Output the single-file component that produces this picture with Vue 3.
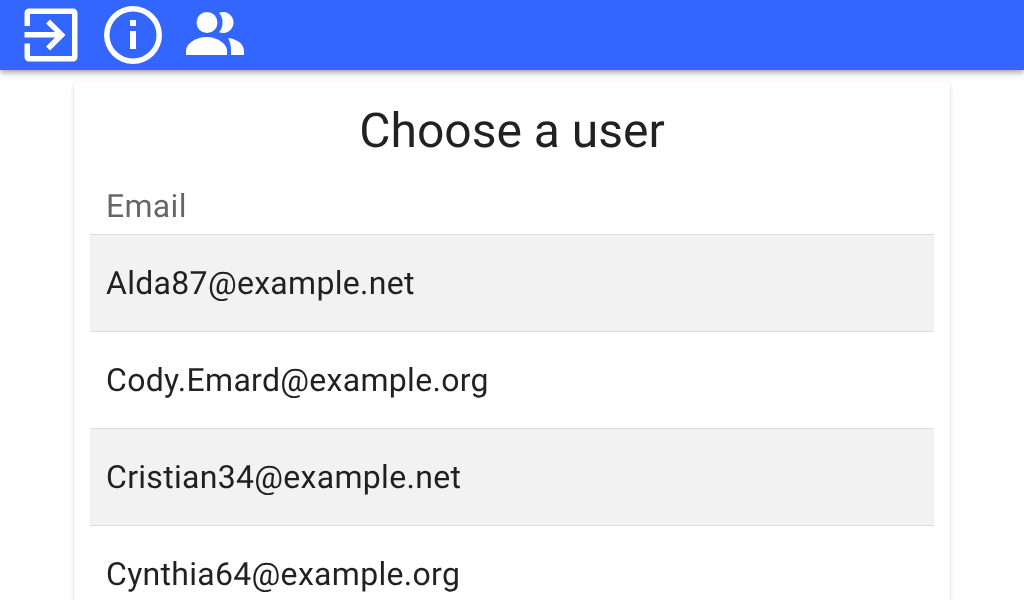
<template>
  <div class="page">
    <header class="toolbar">
      <svg class="icon" width="54" height="70" viewBox="24 0 54 70" fill="#fff">
        <path fill-rule="evenodd" d="M29 8.500h44a4.500 4.500 0 0 1 4.500 4.500v44a4.500 4.500 0 0 1-4.500 4.500H29a4.500 4.500 0 0 1-4.500-4.500V43.500H30V56h42V14H30v12h-5.500V13A4.500 4.500 0 0 1 29 8.500z" />
        <path d="M24.500 32h30.500l-9-8.500 4-4 15.500 15.500-15.500 15.500-4-4 9-9H24.500z" />
      </svg>
      <svg class="icon info" width="58" height="70" viewBox="104 0 58 70" fill="#fff">
        <path fill-rule="evenodd" d="M133 6a29 29 0 1 0 0 58 29 29 0 0 0 0-58zm0 5.500a23.500 23.500 0 1 1 0 47 23.500 23.500 0 0 1 0-47z" />
        <path d="M130 20h6v6h-6zM130 31h6v18h-6z" />
      </svg>
      <svg class="icon people" width="60" height="70" viewBox="185 0 60 70" fill="#fff">
        <circle cx="207" cy="22.500" r="10.500" />
        <path d="M219 12.800a10.500 10.500 0 1 1 0 19.400 15 15 0 0 0 0-19.400z" />
        <path d="M186 55v-4c0-8 11-14 20.500-14S227 43 227 51v4z" />
        <path d="M228 38c9 1 16 6 16 13v4h-13v-5c0-4-1-9-3-12z" />
      </svg>
    </header>
    <main class="card">
      <h1>Choose a user</h1>
      <table>
        <thead>
          <tr><th>Email</th></tr>
        </thead>
        <tbody>
          <tr v-for="email in emails" :key="email">
            <td>{{ email }}</td>
          </tr>
        </tbody>
      </table>
    </main>
  </div>
</template>

<script setup>
const emails = [
  'Alda87@example.net',
  'Cody.Emard@example.org',
  'Cristian34@example.net',
  'Cynthia64@example.org'
]
</script>

<style>
html, body {
  height: 100%;
  overflow: hidden;
  background: #fff;
}
</style>

<style scoped>
.page {
  font-family: Roboto, sans-serif;
  color: rgba(0, 0, 0, 0.87);
  text-rendering: geometricPrecision;
}

.toolbar {
  height: 70px;
  background: #3366ff;
  display: flex;
  align-items: center;
  padding-left: 24px;
  gap: 26px;
  box-shadow: 0 2px 4px -1px rgba(0, 0, 0, 0.2), 0 4px 5px rgba(0, 0, 0, 0.14), 0 1px 10px rgba(0, 0, 0, 0.12);
}

.people {
  margin-left: -3px;
}

.card {
  width: 844px;
  margin: 12px auto 0;
  padding: 0 16px;
  border-radius: 4px;
  background: #fff;
  box-shadow: 0 3px 1px -2px rgba(0, 0, 0, 0.2), 0 2px 2px rgba(0, 0, 0, 0.14), 0 1px 5px rgba(0, 0, 0, 0.12);
  will-change: transform;
}

h1 {
  margin: 0;
  padding-top: 1px;
  height: 95px;
  line-height: 96px;
  font-size: 48px;
  font-weight: 400;
  text-align: center;
}

table {
  width: 100%;
  border-collapse: collapse;
  letter-spacing: 0.3px;
}

th {
  height: 56px;
  padding: 0 16px;
  text-align: left;
  font-size: 32px;
  font-weight: 400;
  color: rgba(0, 0, 0, 0.6);
  border-bottom: 1px solid #ddd;
}

td {
  height: 96px;
  padding: 0 16px;
  font-size: 32px;
  border-bottom: 1px solid #ddd;
}

tbody tr:nth-child(odd) {
  background: #f2f2f2;
}
</style>
